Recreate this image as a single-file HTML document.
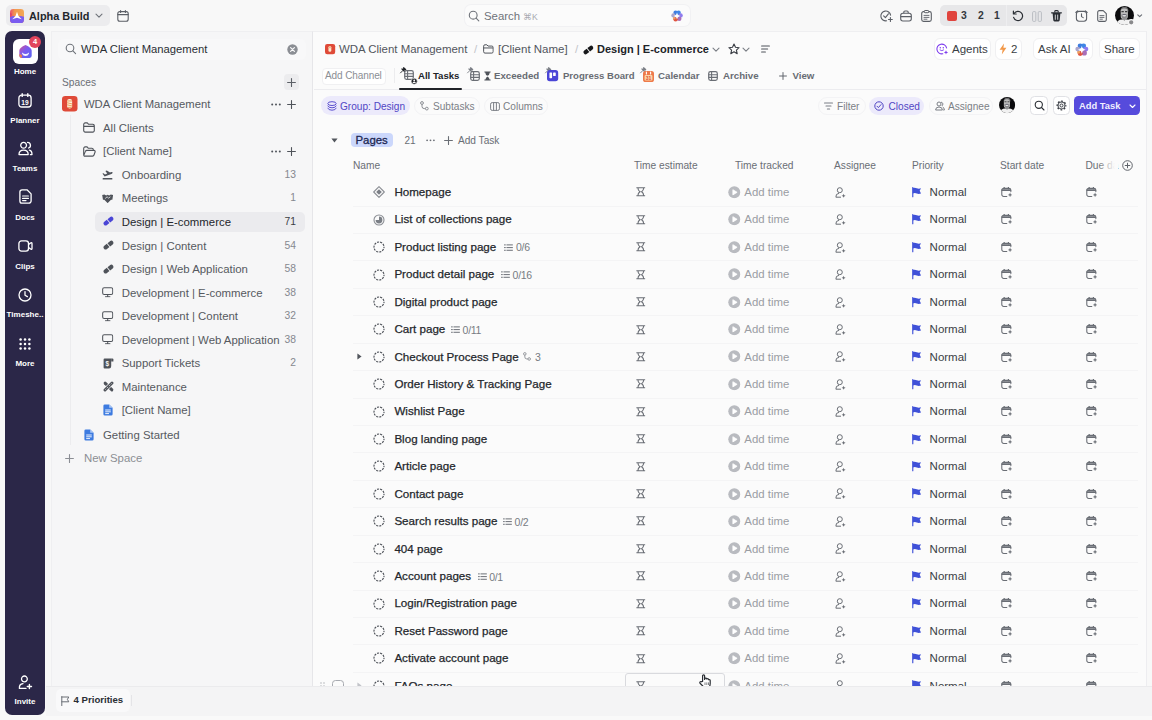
<!DOCTYPE html>
<html>
<head>
<meta charset="utf-8">
<title>Design | E-commerce</title>
<style>
*{box-sizing:border-box;margin:0;padding:0}
html,body{width:1152px;height:720px;overflow:hidden}
body{font-family:"Liberation Sans",sans-serif;background:#f8f8f8;color:#2a2e34;position:relative;font-size:11.5px}
.a{position:absolute;white-space:nowrap}
.t{position:absolute;white-space:nowrap;line-height:14px;height:14px}
svg{position:absolute;overflow:visible}
/* top bar */
#top{left:0;top:0;width:1152px;height:31px;background:#f8f8f8}
/* rail */
#rail{left:5px;top:31px;width:40px;height:684px;background:#2b2748;border-radius:7px}
.rl{color:#fff;font-weight:700;font-size:8px;text-align:center;width:40px;left:5px;line-height:10px;height:10px}
/* sidebar */
#side{left:51px;top:31px;width:262px;height:655px;background:#f6f6f7;border-left:1px solid #efeff1;border-top:1px solid #efeff1}
.sr{font-size:11.4px;color:#555960}
.cnt{font-size:10.3px;color:#85888f;text-align:right;width:30px;left:266px}
/* main */
#main{left:312px;top:31px;width:834.5px;height:655px;background:#fbfbfb;border-left:1px solid #e6e6e9;border-right:1px solid #ededf0;border-top:1px solid #efeff1}
.hd{font-size:10.2px;color:#6a6e75}
.tn{font-size:11.6px;color:#24272c;-webkit-text-stroke:0.25px #24272c}
.at{font-size:11.4px;color:#9a9da3}
.nm{font-size:11.5px;color:#3a3e45}
.sub{font-size:10.5px;letter-spacing:-.3px;color:#777b82}
.rowline{position:absolute;left:353px;width:785px;height:1px;background:#f4f4f5}
</style>
</head>
<body>
<div class="a" id="top"></div>
<div class="a" id="rail"></div>
<div class="a" id="side"></div>
<div class="a" id="main"></div>
<!-- top bar -->
<div class="a" style="left:6px;top:5px;width:104px;height:21px;background:#ececee;border-radius:5px"></div>
<svg style="left:10.2px;top:8.6px" width="14" height="14" viewBox="0 0 15 15"><defs><linearGradient id="lg1" x1="0" y1="0" x2="1" y2="0"><stop offset="0" stop-color="#ea4f6e"/><stop offset=".35" stop-color="#f2994f"/><stop offset="1" stop-color="#f2a655"/></linearGradient><clipPath id="lgc"><rect width="15" height="15" rx="3.6"/></clipPath></defs><g clip-path="url(#lgc)"><rect width="15" height="15" fill="url(#lg1)"/><path d="M0 8.4 L3.4 7.6 L7.5 8.6 L11.6 7.6 L15 8.4 V15 H0Z" fill="#7a5cf0"/><path d="M0 4 L2.2 5 L1.6 8 L0 8.6Z" fill="#e2456a"/><path d="M7.5 3 L9.1 7.6 L12.6 11 L7.5 9.3 L2.4 11 L5.9 7.6Z" fill="#fff"/></g></svg>
<div class="t" style="left:29px;top:9px;font-size:10.9px;font-weight:700;color:#23262b">Alpha Build</div>
<svg style="left:95px;top:13px" width="8" height="6" viewBox="0 0 8 6"><path d="M1 1.2 L4 4.2 L7 1.2" fill="none" stroke="#6f737a" stroke-width="1.1" stroke-linecap="round" stroke-linejoin="round"/></svg>
<svg style="left:117px;top:10px" width="12" height="12" viewBox="0 0 12 12"><rect x=".8" y="1.6" width="10.4" height="9.6" rx="2" fill="none" stroke="#5b5f66" stroke-width="1.1"/><path d="M.8 4.6 H11.2 M3.6 .6 V2.4 M8.4 .6 V2.4" stroke="#5b5f66" stroke-width="1.1" stroke-linecap="round"/></svg>
<!-- search -->
<div class="a" style="left:465px;top:5px;width:225px;height:21px;background:#fbfbfb;border-radius:6px;box-shadow:0 0 0 1px #f1f1f3"></div>
<svg style="left:468px;top:10px" width="12" height="12" viewBox="0 0 12 12"><circle cx="5.2" cy="5.2" r="3.9" fill="none" stroke="#6f737a" stroke-width="1.1"/><path d="M8.1 8.1 L10.8 10.8" stroke="#6f737a" stroke-width="1.1" stroke-linecap="round"/></svg>
<div class="t" style="left:484px;top:9px;font-size:11.4px;color:#6f737a">Search</div>
<div class="t" style="left:523px;top:9.5px;font-size:8.6px;color:#a7aab0">&#8984;K</div>
<svg style="left:671px;top:10px" width="12" height="12" viewBox="0 0 12 12"><circle cx="4.6" cy="2.7" r="2.2" fill="#3f7de0"/><circle cx="7.6" cy="2.7" r="2.2" fill="#3f86e6"/><circle cx="9.6" cy="5.4" r="2.2" fill="#8f7bef"/><circle cx="8.2" cy="8.8" r="2.3" fill="#a86fb8"/><circle cx="4.6" cy="9.2" r="2.2" fill="#e0553f"/><circle cx="3.2" cy="8" r="1.4" fill="#f0a060"/><circle cx="2.4" cy="5.4" r="2.1" fill="#aaa5cc"/><path d="M6 2.6 L6.9 5.1 L9.4 6 L6.9 6.9 L6 9.4 L5.1 6.9 L2.6 6 L5.1 5.1Z" fill="#fff"/></svg>
<!-- right icons -->
<svg style="left:880px;top:10px" width="13" height="12" viewBox="0 0 13 12"><path d="M10.6 5.2 A4.9 4.9 0 1 0 6.6 10.8" fill="none" stroke="#5b5f66" stroke-width="1.1" stroke-linecap="round"/><path d="M3.6 5.8 L5.4 7.6 L8.4 3.8" fill="none" stroke="#5b5f66" stroke-width="1.1" stroke-linecap="round" stroke-linejoin="round"/><path d="M10.4 7.6 V11.4 M8.5 9.5 H12.3" stroke="#5b5f66" stroke-width="1.1" stroke-linecap="round"/></svg>
<svg style="left:900px;top:10px" width="12" height="12" viewBox="0 0 12 12"><rect x=".7" y="3.2" width="10.6" height="7.8" rx="2.2" fill="none" stroke="#5b5f66" stroke-width="1.1"/><path d="M3.8 3.2 V2.2 A1.2 1.2 0 0 1 5 1 H7 A1.2 1.2 0 0 1 8.2 2.2 V3.2 M.7 6.6 H11.3" fill="none" stroke="#5b5f66" stroke-width="1.1"/></svg>
<svg style="left:921px;top:10px" width="11" height="12" viewBox="0 0 11 12"><rect x=".7" y="1.6" width="9.6" height="9.8" rx="1.8" fill="none" stroke="#5b5f66" stroke-width="1.1"/><rect x="3.3" y=".5" width="4.4" height="2.2" rx=".8" fill="#f8f8f8" stroke="#5b5f66" stroke-width="1"/><path d="M3 5.4 H8 M3 7.4 H8 M3 9.2 H6" stroke="#5b5f66" stroke-width=".9" stroke-linecap="round"/></svg>
<div class="a" style="left:940px;top:5px;width:127px;height:21px;background:#e7e7e9;border-radius:5px"></div>
<div class="a" style="left:1006px;top:5px;width:1px;height:21px;background:#eeeef0"></div>
<div class="a" style="left:947px;top:11px;width:9.5px;height:9.5px;background:#e0443e;border-radius:2px"></div>
<div class="t" style="left:961px;top:9.3px;font-size:10.4px;font-weight:700;color:#33373d">3</div>
<div class="t" style="left:978px;top:9.3px;font-size:10.4px;font-weight:700;color:#33373d">2</div>
<div class="t" style="left:994px;top:9.3px;font-size:10.4px;font-weight:700;color:#33373d">1</div>
<svg style="left:1012px;top:10px" width="12" height="12" viewBox="0 0 12 12"><path d="M2.2 3.4 A4.6 4.6 0 1 1 1.6 7.4" fill="none" stroke="#2a2e34" stroke-width="1.2" stroke-linecap="round"/><path d="M1.4 1.2 V4 H4.2" fill="none" stroke="#2a2e34" stroke-width="1.2" stroke-linecap="round" stroke-linejoin="round"/></svg>
<svg style="left:1032px;top:10.5px" width="10" height="11" viewBox="0 0 10 11"><rect x=".6" y=".6" width="3.2" height="9.8" rx="1" fill="none" stroke="#b9bcc2" stroke-width="1"/><rect x="6.2" y=".6" width="3.2" height="9.8" rx="1" fill="none" stroke="#b9bcc2" stroke-width="1"/></svg>
<svg style="left:1051px;top:10px" width="11" height="12" viewBox="0 0 11 12"><path d="M.6 2.8 H10.4" stroke="#2a2e34" stroke-width="1.3" stroke-linecap="round"/><path d="M3.8 2.4 V1.4 A.8.8 0 0 1 4.6 .6 H6.4 A.8.8 0 0 1 7.2 1.4 V2.4" fill="none" stroke="#2a2e34" stroke-width="1.1"/><path d="M1.6 3 L2.3 10.3 A1.2 1.2 0 0 0 3.5 11.4 H7.5 A1.2 1.2 0 0 0 8.7 10.3 L9.4 3Z" fill="#2a2e34"/><path d="M4.3 5 V9.4 M6.7 5 V9.4" stroke="#e4e4e7" stroke-width=".9" stroke-linecap="round"/></svg>
<svg style="left:1075px;top:10px" width="13" height="12" viewBox="0 0 13 12"><rect x="1.4" y="1.4" width="10.2" height="9.8" rx="2.6" fill="none" stroke="#5b5f66" stroke-width="1.1"/><path d="M6.5 3.8 V6.6 L8.2 7.6 M.8 2.4 L2.6 .8 M12.2 2.4 L10.4 .8" fill="none" stroke="#5b5f66" stroke-width="1.1" stroke-linecap="round" stroke-linejoin="round"/></svg>
<svg style="left:1097px;top:10px" width="10" height="12" viewBox="0 0 10 12"><path d="M.7 2.2 A1.6 1.6 0 0 1 2.3 .6 H6.2 L9.3 3.7 V9.8 A1.6 1.6 0 0 1 7.7 11.4 H2.3 A1.6 1.6 0 0 1 .7 9.8Z" fill="none" stroke="#5b5f66" stroke-width="1.1" stroke-linejoin="round"/><path d="M2.9 5.6 H7 M2.9 7.4 H7 M2.9 9.2 H5.4" stroke="#5b5f66" stroke-width=".9" stroke-linecap="round"/></svg>
<!-- avatar -->
<svg style="left:1115.1px;top:5.9px" width="20" height="20" viewBox="0 0 20 20"><defs><clipPath id="av1"><circle cx="9.5" cy="9.5" r="9.5"/></clipPath></defs><g clip-path="url(#av1)"><rect width="19" height="19" fill="#0b0b0d"/><path d="M5.2 6 Q5.6 .8 9.6 .8 Q13.4 .8 13.6 6 L12.8 4.4 Q9.6 2.6 6.2 4.4Z" fill="#6e6e70"/><rect x="5.7" y="2.6" width="7.2" height="10.6" rx="3.2" fill="#bdbdbd"/><path d="M6.4 5.6 H8.8 M10 5.6 H12.3" stroke="#3c3c3e" stroke-width="1.1"/><path d="M6.2 8.4 Q9.3 7.4 12.5 8.4 Q12.4 12.6 9.3 12.8 Q6.3 12.6 6.2 8.4Z" fill="#8a8a8c"/><path d="M7.4 9 Q9.3 8.5 11.2 9 Q10.6 10.6 9.3 10.6 Q8 10.6 7.4 9Z" fill="#f2f2f2"/><path d="M7.8 8.7 H10.8" stroke="#2a2a44" stroke-width=".6"/><rect x="7.6" y="12" width="3.6" height="2.4" fill="#8f8f91"/><path d="M.5 19 Q2 13.2 7.6 13.4 L9.4 14.6 L11.2 13.4 Q17 13.2 18.5 19Z" fill="#f1f1f1"/></g><circle cx="16.2" cy="16.3" r="2.7" fill="#8a8a8c" stroke="#f8f8f8" stroke-width="1.1"/></svg>
<svg style="left:1136.6px;top:14.2px" width="5.4" height="3.9" viewBox="0 0 7 5"><path d="M1 1 L3.5 3.5 L6 1" fill="none" stroke="#6a6e75" stroke-width="1.5" stroke-linecap="round" stroke-linejoin="round"/></svg>
<!--TOP-->
<!-- rail -->
<div class="a" style="left:12.5px;top:39px;width:25px;height:25px;background:#fff;border-radius:6px"></div>
<svg style="left:17.6px;top:44.4px" width="15" height="15" viewBox="0 0 16 16"><defs><linearGradient id="hg" x1="0" y1="0" x2="1" y2="1"><stop offset="0" stop-color="#d8508f"/><stop offset=".45" stop-color="#7b5cf0"/><stop offset="1" stop-color="#5a64f0"/></linearGradient></defs><path d="M1.4 7 Q1.6 3.6 8 1 Q14.4 3.6 14.6 7 V12.6 A2.2 2.2 0 0 1 12.4 14.8 H3.6 A2.2 2.2 0 0 1 1.4 12.6Z" fill="url(#hg)"/><path d="M4.4 9 Q8 12.4 11.6 9 L11.6 10.4 Q10.6 12.8 8 12.8 Q5.4 12.8 4.4 10.4Z" fill="#fff" opacity=".95"/><path d="M1.4 11 Q3.4 10.4 4.4 12.4 L3.8 14.8 Q1.6 14.6 1.4 12.6Z" fill="#ee7d4c"/></svg>
<div class="a" style="left:29px;top:36px;width:12px;height:12px;border-radius:6px;background:#e2445c;color:#fff;font-size:7.5px;font-weight:700;text-align:center;line-height:12px">4</div>
<div class="a rl" style="top:67px">Home</div>
<svg style="left:18px;top:93px" width="14" height="15" viewBox="0 0 14 15"><rect x=".9" y="2.2" width="12.2" height="11.8" rx="2.8" fill="none" stroke="#fff" stroke-width="1.3"/><path d="M4.2 .8 V3.4 M9.8 .8 V3.4" stroke="#fff" stroke-width="1.4" stroke-linecap="round"/><text x="7" y="11.6" font-family="Liberation Sans" font-weight="700" font-size="6.6" fill="#fff" text-anchor="middle">19</text></svg>
<div class="a rl" style="top:115.5px">Planner</div>
<svg style="left:18px;top:141px" width="15" height="15" viewBox="0 0 15 15"><path d="M5.6 1.4 A2.9 2.9 0 1 1 5.6 7.2 A2.9 2.9 0 1 1 5.6 1.4Z M1 13.6 Q1 9.2 5.6 9.2 Q10.2 9.2 10.2 13.6Z" fill="none" stroke="#fff" stroke-width="1.3" stroke-linejoin="round"/><path d="M9.6 1.4 A2.9 2.9 0 0 1 10.6 7 M11.4 9.2 Q14 9.8 14 13.6 H12.4" fill="none" stroke="#fff" stroke-width="1.3" stroke-linecap="round" stroke-linejoin="round"/></svg>
<div class="a rl" style="top:164px">Teams</div>
<svg style="left:19px;top:189px" width="13" height="15" viewBox="0 0 13 15"><path d="M.9 3 A2.2 2.2 0 0 1 3.1 .8 H8 L12.1 4.9 V12 A2.2 2.2 0 0 1 9.9 14.2 H3.1 A2.2 2.2 0 0 1 .9 12Z" fill="none" stroke="#fff" stroke-width="1.3" stroke-linejoin="round"/><path d="M3.6 7 H9.4 M3.6 9.4 H9.4 M3.6 11.6 H7" stroke="#fff" stroke-width="1.2" stroke-linecap="round"/></svg>
<div class="a rl" style="top:213px">Docs</div>
<svg style="left:18px;top:240px" width="15" height="12" viewBox="0 0 15 12"><rect x=".9" y=".9" width="9.6" height="10.2" rx="2.6" fill="none" stroke="#fff" stroke-width="1.3"/><path d="M10.6 4.4 L13 2.8 Q14 2.4 14 3.6 V8.4 Q14 9.6 13 9.2 L10.6 7.6" fill="none" stroke="#fff" stroke-width="1.3" stroke-linejoin="round"/></svg>
<div class="a rl" style="top:261.5px">Clips</div>
<svg style="left:18px;top:287.5px" width="14" height="14" viewBox="0 0 14 14"><circle cx="7" cy="7" r="6" fill="none" stroke="#fff" stroke-width="1.3"/><path d="M7 3.6 V7.2 L9.4 8.6" fill="none" stroke="#fff" stroke-width="1.3" stroke-linecap="round" stroke-linejoin="round"/></svg>
<div class="a rl" style="top:310px">Timeshe..</div>
<svg style="left:19px;top:338px" width="12" height="12" viewBox="0 0 12 12" fill="#fff"><circle cx="1.6" cy="1.6" r="1.25"/><circle cx="6" cy="1.6" r="1.25"/><circle cx="10.4" cy="1.6" r="1.25"/><circle cx="1.6" cy="6" r="1.25"/><circle cx="6" cy="6" r="1.25"/><circle cx="10.4" cy="6" r="1.25"/><circle cx="1.6" cy="10.4" r="1.25"/><circle cx="6" cy="10.4" r="1.25"/><circle cx="10.4" cy="10.4" r="1.25"/></svg>
<div class="a rl" style="top:359px">More</div>
<svg style="left:18px;top:675px" width="15" height="15" viewBox="0 0 15 15"><path d="M6.4 1 A2.9 2.9 0 1 1 6.4 6.8 A2.9 2.9 0 1 1 6.4 1Z" fill="none" stroke="#fff" stroke-width="1.3"/><path d="M8 13.4 H1.4 Q1 9 5 8.6" fill="none" stroke="#fff" stroke-width="1.3" stroke-linecap="round" stroke-linejoin="round"/><path d="M11.4 9.4 V13.6 M9.3 11.5 H13.5" stroke="#fff" stroke-width="1.4" stroke-linecap="round"/></svg>
<div class="a rl" style="top:697px">Invite</div>
<!--RAIL-->
<svg width="0" height="0" style="left:0;top:0"><defs>
<symbol id="i-folder" viewBox="0 0 12 11"><path d="M.7 2.4 A1.5 1.5 0 0 1 2.2 .9 H4.3 L5.6 2.3 H9.8 A1.5 1.5 0 0 1 11.3 3.8 V8.6 A1.5 1.5 0 0 1 9.8 10.1 H2.2 A1.5 1.5 0 0 1 .7 8.6Z M.7 4.4 H11.3" fill="none" stroke="currentColor" stroke-width="1.1" stroke-linejoin="round"/></symbol>
<symbol id="i-folderopen" viewBox="0 0 13 11"><path d="M.7 8.8 V2.4 A1.5 1.5 0 0 1 2.2 .9 H4.1 L5.4 2.3 H8.8 A1.5 1.5 0 0 1 10.3 3.8 V4.4" fill="none" stroke="currentColor" stroke-width="1.1" stroke-linejoin="round"/><path d="M.8 9 L2.4 5.4 A1.6 1.6 0 0 1 3.8 4.4 H11 A1.2 1.2 0 0 1 12.1 6 L11 9 A1.6 1.6 0 0 1 9.6 10.1 H1.8 A1 1 0 0 1 .8 9Z" fill="none" stroke="currentColor" stroke-width="1.1" stroke-linejoin="round"/></symbol>
<symbol id="i-plane" viewBox="0 0 11 10"><path d="M.4 3.6 L1.6 3.2 L3 4.4 L5.2 3.6 L3.4 .9 L4.8 .5 L8 2.6 L9.6 2 Q10.8 1.8 10.6 2.8 Q10.4 3.6 9.4 4 L2.6 6.4Z" fill="currentColor"/><rect x=".6" y="8" width="9.8" height="1.5" rx=".5" fill="currentColor"/></symbol>
<symbol id="i-hands" viewBox="0 0 12 10"><path d="M.2 1 L2.6 .4 L4.4 1.6 L6 .8 L7.6 1.6 L9.4 .4 L11.8 1 L11 6 L9.6 6.2 L6.4 9.4 Q6 9.8 5.6 9.4 L2.4 6.2 L1 6Z" fill="currentColor"/><path d="M3.6 4.6 L5.4 3 L7 4.4 L8.6 3.2" fill="none" stroke="#f6f6f7" stroke-width=".8" stroke-linecap="round" stroke-linejoin="round"/></symbol>
<symbol id="i-pen" viewBox="0 0 11 10.4"><path d="M6.57 7.24 L4.07 9.22 A2.2 2.2 0 0 1 1.33 5.78 L3.84 3.79Z M7.28 6.68 L9.87 4.62 A2.2 2.2 0 0 0 7.13 1.18 L4.55 3.23Z" fill="currentColor"/></symbol>
<symbol id="i-mon" viewBox="0 0 12 11"><rect x=".7" y=".7" width="10.6" height="7.2" rx="1.6" fill="none" stroke="currentColor" stroke-width="1.1"/><path d="M6 8 V9.8 M3.6 10.2 H8.4" stroke="currentColor" stroke-width="1.1" stroke-linecap="round"/></symbol>
<symbol id="i-ticket" viewBox="0 0 11 11"><path d="M.6 1.6 A1 1 0 0 1 1.6 .6 H8.2 V8.2 A2.2 2.2 0 0 1 6 10.4 H1.6 A1 1 0 0 1 .6 9.4Z" fill="currentColor"/><path d="M8.2 .6 H9.4 A1 1 0 0 1 10.4 1.6 V3.4 H8.2Z" fill="currentColor"/><text x="4.4" y="8" font-family="Liberation Sans" font-weight="700" font-size="6.4" fill="#f6f6f7" text-anchor="middle">$</text></symbol>
<symbol id="i-tools" viewBox="0 0 11 11"><path d="M2.1 2.1 L8.9 8.9" stroke="currentColor" stroke-width="2.9" stroke-linecap="round"/><path d="M2 9 L9 2" stroke="#f6f6f7" stroke-width="4.3" stroke-linecap="butt"/><path d="M2 9 L9 2" stroke="currentColor" stroke-width="2.9" stroke-linecap="round"/><path d="M2.4 8.6 L8.6 2.4" stroke="#f6f6f7" stroke-width=".8" stroke-dasharray="1.2 1.3"/></symbol>
<symbol id="i-doc" viewBox="0 0 10 12"><path d="M.4 1.8 A1.4 1.4 0 0 1 1.8 .4 H6.2 L9.6 3.8 V10.2 A1.4 1.4 0 0 1 8.2 11.6 H1.8 A1.4 1.4 0 0 1 .4 10.2Z" fill="#3d7be0"/><path d="M6.2 .4 V3.8 H9.6Z" fill="#a9c6f5"/><path d="M2.6 6 H7.4 M2.6 7.8 H7.4 M2.6 9.6 H5.6" stroke="#fff" stroke-width=".9" stroke-linecap="round"/></symbol>
<symbol id="i-dots" viewBox="0 0 10 3"><circle cx="1.2" cy="1.5" r="1"/><circle cx="5" cy="1.5" r="1"/><circle cx="8.8" cy="1.5" r="1"/></symbol>
<symbol id="i-plus" viewBox="0 0 9 9"><path d="M4.5 .6 V8.4 M.6 4.5 H8.4" stroke="currentColor" stroke-width="1.1" stroke-linecap="round"/></symbol>
</defs></svg>
<div class="a" style="left:58px;top:39px;width:248px;height:21px;background:#f8f8f9;border-radius:6px"></div>
<svg style="left:65px;top:43px" width="12" height="12" viewBox="0 0 12 12"><circle cx="5" cy="5" r="3.8" fill="none" stroke="#6f737a" stroke-width="1.1"/><path d="M7.9 7.9 L10.6 10.6" stroke="#6f737a" stroke-width="1.1" stroke-linecap="round"/></svg>
<div class="t" style="left:81px;top:42px;font-size:11.25px;color:#2a2e34">WDA Client Management</div>
<svg style="left:287px;top:44px" width="11" height="11" viewBox="0 0 11 11"><circle cx="5.5" cy="5.5" r="5.2" fill="#8b8e94"/><path d="M3.6 3.6 L7.4 7.4 M7.4 3.6 L3.6 7.4" stroke="#f8f8f9" stroke-width="1.2" stroke-linecap="round"/></svg>
<div class="t" style="left:62px;top:75.5px;font-size:10.2px;color:#6a6e75">Spaces</div>
<div class="a" style="left:284px;top:74px;width:15px;height:16px;background:#ececee;border-radius:4px"></div>
<svg style="left:287px;top:77.5px;color:#5b5f66" width="9" height="9"><use href="#i-plus"/></svg>
<div class="a" style="left:70px;top:115px;width:1px;height:330px;background:#ececee"></div>
<svg style="left:62.1px;top:96.4px" width="15.5" height="15.5" viewBox="0 0 15 15"><rect width="15" height="15" rx="3.2" fill="#df4a38"/><rect x="5" y="2.8" width="4.8" height="9.2" rx="2" fill="#fbf1e2"/><path d="M5.6 4.8 H9.2 M5.4 6.6 L9.4 7.6 M5.4 8.6 L9.4 9.6 M6 11 H8.8" stroke="#f09a4a" stroke-width=".9" stroke-linecap="round"/></svg>
<div class="t sr" style="left:84px;top:97px;font-size:11.25px">WDA Client Management</div>
<svg style="left:271px;top:102.5px;fill:#4f535a" width="10" height="3"><use href="#i-dots"/></svg>
<svg style="left:287px;top:99.5px;color:#4f535a" width="9" height="9"><use href="#i-plus"/></svg>
<svg style="left:83px;top:122.2px;color:#4f535a" width="12" height="11"><use href="#i-folder"/></svg>
<div class="t sr" style="left:103px;top:120.8px">All Clients</div>
<svg style="left:83px;top:145.8px;color:#4f535a" width="13" height="11"><use href="#i-folderopen"/></svg>
<div class="t sr" style="left:103px;top:144.3px">[Client Name]</div>
<svg style="left:271px;top:149.8px;fill:#4f535a" width="10" height="3"><use href="#i-dots"/></svg>
<svg style="left:287px;top:146.8px;color:#4f535a" width="9" height="9"><use href="#i-plus"/></svg>
<div class="a" style="left:95px;top:211.6px;width:209.5px;height:20.6px;background:#ebebee;border-radius:5px"></div>
<svg style="left:101.5px;top:170.1px;color:#4f535a" width="11" height="10"><use href="#i-plane"/></svg>
<div class="t sr" style="left:121.7px;top:167.9px;">Onboarding</div>
<div class="t cnt" style="top:167.9px;">13</div>
<svg style="left:102px;top:193.8px;color:#4f535a" width="11.3" height="9.4"><use href="#i-hands"/></svg>
<div class="t sr" style="left:121.7px;top:191.4px;">Meetings</div>
<div class="t cnt" style="top:191.4px;">1</div>
<svg style="left:102.5px;top:216.4px;color:#4a45d6" width="10.8" height="10.2"><use href="#i-pen"/></svg>
<div class="t sr" style="left:121.7px;top:214.9px;color:#24272c;">Design | E-commerce</div>
<div class="t cnt" style="top:214.9px;color:#3a3e45;">71</div>
<svg style="left:102.5px;top:240.0px;color:#4f535a" width="10.8" height="10.2"><use href="#i-pen"/></svg>
<div class="t sr" style="left:121.7px;top:238.5px;">Design | Content</div>
<div class="t cnt" style="top:238.5px;">54</div>
<svg style="left:102.5px;top:263.6px;color:#4f535a" width="10.8" height="10.2"><use href="#i-pen"/></svg>
<div class="t sr" style="left:121.7px;top:262.1px;">Design | Web Application</div>
<div class="t cnt" style="top:262.1px;">58</div>
<svg style="left:102.0px;top:287.1px;color:#4f535a" width="11.4" height="10.6"><use href="#i-mon"/></svg>
<div class="t sr" style="left:121.7px;top:285.6px;">Development | E-commerce</div>
<div class="t cnt" style="top:285.6px;">38</div>
<svg style="left:102.0px;top:310.7px;color:#4f535a" width="11.4" height="10.6"><use href="#i-mon"/></svg>
<div class="t sr" style="left:121.7px;top:309.2px;">Development | Content</div>
<div class="t cnt" style="top:309.2px;">32</div>
<svg style="left:102.0px;top:334.2px;color:#4f535a" width="11.4" height="10.6"><use href="#i-mon"/></svg>
<div class="t sr" style="left:121.7px;top:332.7px;">Development | Web Application</div>
<div class="t cnt" style="top:332.7px;">38</div>
<svg style="left:102.5px;top:357.8px;color:#4f535a" width="11" height="11"><use href="#i-ticket"/></svg>
<div class="t sr" style="left:121.7px;top:356.2px;">Support Tickets</div>
<div class="t cnt" style="top:356.2px;">2</div>
<svg style="left:102.5px;top:381.3px;color:#4f535a" width="11" height="11"><use href="#i-tools"/></svg>
<div class="t sr" style="left:121.7px;top:379.8px;">Maintenance</div>
<svg style="left:103.0px;top:404.4px;color:#4f535a" width="10" height="12"><use href="#i-doc"/></svg>
<div class="t sr" style="left:121.7px;top:403.4px;">[Client Name]</div>
<svg style="left:84px;top:428.5px" width="10" height="12"><use href="#i-doc"/></svg>
<div class="t sr" style="left:103px;top:427.5px">Getting Started</div>
<svg style="left:65px;top:453.7px;color:#8b8e94" width="9" height="9"><use href="#i-plus"/></svg>
<div class="t sr" style="left:84px;top:451.2px;color:#8b8e94">New Space</div>
<!--SIDE-->
<svg style="left:324.8px;top:44.1px" width="10.2" height="10.2" viewBox="0 0 10 10"><rect width="10" height="10" rx="2.2" fill="#df4a38"/><rect x="3.4" y="2.1" width="2.8" height="5.6" rx="1.2" fill="#fbe9cf"/><path d="M3.8 3.6 H5.8" stroke="#f09a4a" stroke-width=".7"/></svg>
<div class="t" style="left:339px;top:42px;font-size:11.45px;color:#52565d">WDA Client Management</div>
<div class="t" style="left:474px;top:42px;font-size:11.5px;color:#c2c4c9">/</div>
<svg style="left:483.3px;top:44.3px;color:#4f535a" width="10.8" height="9.9"><use href="#i-folder"/></svg>
<div class="t" style="left:498px;top:42px;font-size:11.5px;color:#52565d">[Client Name]</div>
<div class="t" style="left:575px;top:42px;font-size:11.5px;color:#c2c4c9">/</div>
<svg style="left:582.5px;top:44.6px;color:#17181b" width="10.6" height="10"><use href="#i-pen"/></svg>
<div class="t" style="left:597px;top:42px;font-size:11px;font-weight:700;color:#202328">Design | E-commerce</div>
<svg style="left:712px;top:47px" width="8" height="6" viewBox="0 0 8 6"><path d="M1 1.2 L4 4.2 L7 1.2" fill="none" stroke="#7b7f86" stroke-width="1.1" stroke-linecap="round" stroke-linejoin="round"/></svg>
<svg style="left:727.5px;top:43px" width="12" height="12" viewBox="0 0 12 12"><path d="M6 1 L7.5 4.3 L11.1 4.7 L8.4 7.1 L9.2 10.7 L6 8.8 L2.8 10.7 L3.6 7.1 L.9 4.7 L4.5 4.3Z" fill="none" stroke="#3a3e45" stroke-width="1.1" stroke-linejoin="round"/></svg>
<svg style="left:742px;top:47px" width="8" height="6" viewBox="0 0 8 6"><path d="M1 1.2 L4 4.2 L7 1.2" fill="none" stroke="#7b7f86" stroke-width="1.1" stroke-linecap="round" stroke-linejoin="round"/></svg>
<svg style="left:761px;top:45px" width="9" height="8" viewBox="0 0 9 8"><path d="M.6 1 H8.4 M.6 4 H6.6 M.6 7 H4.4" stroke="#4f535a" stroke-width="1.1" stroke-linecap="round"/></svg>
<div class="a" style="left:934px;top:38px;width:57px;height:22px;background:#fff;border:1px solid #f0f0f2;border-radius:6px"></div>
<svg style="left:936px;top:43px" width="12" height="12" viewBox="0 0 12 12"><path d="M10.6 5 A4.9 4.9 0 1 0 6.8 10.8" fill="none" stroke="#7c3aed" stroke-width="1.1" stroke-linecap="round"/><circle cx="4.3" cy="4.8" r=".7" fill="#7c3aed"/><circle cx="7.3" cy="4.8" r=".7" fill="#7c3aed"/><path d="M4 7 Q5.8 8.6 7.6 7" fill="none" stroke="#7c3aed" stroke-width=".9" stroke-linecap="round"/><path d="M10 7.2 L10.6 8.8 L12.2 9.4 L10.6 10 L10 11.6 L9.4 10 L7.8 9.4 L9.4 8.8Z" fill="#7c3aed"/></svg>
<div class="t" style="left:952px;top:42px;font-size:11.5px;color:#3a3e45">Agents</div>
<div class="a" style="left:995px;top:38px;width:27px;height:22px;background:#fff;border:1px solid #f0f0f2;border-radius:6px"></div>
<svg style="left:999px;top:43px" width="8" height="12" viewBox="0 0 8 12"><path d="M5 .4 L.6 6.8 H3.6 L2.8 11.6 L7.4 4.8 H4.4Z" fill="#f2994a"/></svg>
<div class="t" style="left:1011px;top:42px;font-size:11.5px;color:#3a3e45">2</div>
<div class="a" style="left:1033px;top:38px;width:60px;height:22px;background:#fff;border:1px solid #f0f0f2;border-radius:6px"></div>
<div class="t" style="left:1038px;top:42px;font-size:11.5px;color:#3a3e45">Ask AI</div>
<svg style="left:1075px;top:42.6px" width="13.6" height="13.6" viewBox="0 0 12 12"><circle cx="4.6" cy="2.7" r="2.2" fill="#3f7de0"/><circle cx="7.6" cy="2.7" r="2.2" fill="#3f86e6"/><circle cx="9.6" cy="5.4" r="2.2" fill="#8f7bef"/><circle cx="8.2" cy="8.8" r="2.3" fill="#a86fb8"/><circle cx="4.6" cy="9.2" r="2.2" fill="#e0553f"/><circle cx="3.2" cy="8" r="1.4" fill="#f0a060"/><circle cx="2.4" cy="5.4" r="2.1" fill="#aaa5cc"/><path d="M6 2.6 L6.9 5.1 L9.4 6 L6.9 6.9 L6 9.4 L5.1 6.9 L2.6 6 L5.1 5.1Z" fill="#fff"/></svg>
<div class="a" style="left:1099px;top:38px;width:41px;height:22px;background:#fff;border:1px solid #f0f0f2;border-radius:6px"></div>
<div class="t" style="left:1104px;top:42px;font-size:11.5px;color:#3a3e45">Share</div>
<div class="a" style="left:322px;top:67.5px;width:64px;height:17px;background:#fff;border:1px solid #f0f0f2;border-radius:4px"></div>
<div class="t" style="left:325px;top:68.5px;font-size:10px;letter-spacing:-.1px;color:#8b8e94">Add Channel</div>
<div class="a" style="left:393.5px;top:68px;width:1px;height:15px;background:#ececee"></div>
<div class="a" style="left:314px;top:88.5px;width:832px;height:1px;background:#ececef"></div>
<div class="a" style="left:399.2px;top:88.3px;width:62.8px;height:1.8px;background:#202328;border-radius:1px"></div>
<svg style="left:400.2px;top:66.9px" width="6.4" height="6.4" viewBox="0 0 6.4 6.4"><path d="M3.7 1 L5.4 2.7" stroke="#202328" stroke-width="1.7" stroke-linecap="round"/><path d="M4.5 1.9 L3.2 3.2" stroke="#202328" stroke-width="2.3"/><path d="M2 2 L4.4 4.4" stroke="#202328" stroke-width="1.3" stroke-linecap="round"/><path d="M2.8 3.6 L.5 5.9" stroke="#202328" stroke-width=".9" stroke-linecap="round"/></svg>
<svg style="left:403.7px;top:70.4px" width="10" height="10" viewBox="0 0 10 10"><rect x=".7" y=".7" width="8.6" height="8.6" rx="1.8" fill="none" stroke="#6a6e75" stroke-width="1.2"/><path d="M.7 3.7 H9.3 M.7 6.4 H9.3 M3.6 .7 V9.3" stroke="#6a6e75" stroke-width="1.1"/></svg>
<svg style="left:411.1px;top:77.8px" width="6.4" height="6.4" viewBox="0 0 7 7"><circle cx="3.5" cy="3.5" r="3.3" fill="#202328" stroke="#fbfbfb" stroke-width=".6"/><circle cx="3.5" cy="2.7" r="1" fill="#fbfbfb"/><path d="M1.7 5.6 Q1.9 4.1 3.5 4.1 Q5.1 4.1 5.3 5.6Z" fill="#fbfbfb"/></svg>
<div class="t" style="left:418px;top:68.5px;font-size:9.6px;font-weight:700;color:#202328">All Tasks</div>
<svg style="left:466.7px;top:66.9px" width="6.4" height="6.4" viewBox="0 0 6.4 6.4"><path d="M3.7 1 L5.4 2.7" stroke="#7b7f86" stroke-width="1.7" stroke-linecap="round"/><path d="M4.5 1.9 L3.2 3.2" stroke="#7b7f86" stroke-width="2.3"/><path d="M2 2 L4.4 4.4" stroke="#7b7f86" stroke-width="1.3" stroke-linecap="round"/><path d="M2.8 3.6 L.5 5.9" stroke="#7b7f86" stroke-width=".9" stroke-linecap="round"/></svg>
<svg style="left:470px;top:70.8px" width="10" height="10" viewBox="0 0 10 10"><rect x=".7" y=".7" width="8.6" height="8.6" rx="1.8" fill="none" stroke="#6a6e75" stroke-width="1.2"/><path d="M.7 3.7 H9.3 M.7 6.4 H9.3 M3.6 .7 V9.3" stroke="#6a6e75" stroke-width="1.1"/></svg>
<svg style="left:484px;top:71px" width="7" height="10" viewBox="0 0 7 10"><path d="M.4 .4 H6.6 V1.4 H.4Z M.4 8.6 H6.6 V9.6 H.4Z M1.2 1.6 H5.8 Q5.6 4 3.5 4.8 Q1.4 4 1.2 1.6Z M3.5 5.4 Q5.2 6.2 5.6 8.4 H1.4 Q1.8 6.2 3.5 5.4Z" fill="#4f535a"/></svg>
<div class="t" style="left:494px;top:68.5px;font-size:9.7px;font-weight:700;color:#686c73">Exceeded</div>
<svg style="left:545px;top:66.6px" width="6.4" height="6.4" viewBox="0 0 6.4 6.4"><path d="M3.7 1 L5.4 2.7" stroke="#7b7f86" stroke-width="1.7" stroke-linecap="round"/><path d="M4.5 1.9 L3.2 3.2" stroke="#7b7f86" stroke-width="2.3"/><path d="M2 2 L4.4 4.4" stroke="#7b7f86" stroke-width="1.3" stroke-linecap="round"/><path d="M2.8 3.6 L.5 5.9" stroke="#7b7f86" stroke-width=".9" stroke-linecap="round"/></svg>
<svg style="left:547.4px;top:70.4px" width="11.2" height="11.2" viewBox="0 0 11 11"><rect width="11" height="11" rx="2.6" fill="#4a45d6"/><rect x="2.4" y="2.4" width="2.6" height="5.6" rx=".6" fill="#fff"/><rect x="6" y="2.4" width="2.6" height="3.6" rx=".6" fill="#fff"/></svg>
<div class="t" style="left:563px;top:68.5px;font-size:9.55px;font-weight:700;color:#686c73">Progress Board</div>
<svg style="left:640.2px;top:66.6px" width="6.4" height="6.4" viewBox="0 0 6.4 6.4"><path d="M3.7 1 L5.4 2.7" stroke="#7b7f86" stroke-width="1.7" stroke-linecap="round"/><path d="M4.5 1.9 L3.2 3.2" stroke="#7b7f86" stroke-width="2.3"/><path d="M2 2 L4.4 4.4" stroke="#7b7f86" stroke-width="1.3" stroke-linecap="round"/><path d="M2.8 3.6 L.5 5.9" stroke="#7b7f86" stroke-width=".9" stroke-linecap="round"/></svg>
<svg style="left:643px;top:70.5px" width="11" height="11" viewBox="0 0 11 11"><rect width="11" height="11" rx="2.6" fill="#ee7a4a"/><rect x="1.6" y="4" width="7.8" height="5.6" rx="1" fill="#fbd7a8"/><path d="M3.4 1 V3 M7.6 1 V3" stroke="#fff" stroke-width="1.1" stroke-linecap="round"/><text x="5.5" y="9" font-family="Liberation Sans" font-weight="700" font-size="5" fill="#e2553a" text-anchor="middle">31</text></svg>
<div class="t" style="left:658px;top:68.5px;font-size:9.7px;font-weight:700;color:#686c73">Calendar</div>
<svg style="left:708.2px;top:70.8px" width="10" height="10" viewBox="0 0 10 10"><rect x=".7" y=".7" width="8.6" height="8.6" rx="1.8" fill="none" stroke="#6a6e75" stroke-width="1.2"/><path d="M.7 3.7 H9.3 M.7 6.4 H9.3 M3.6 .7 V9.3" stroke="#6a6e75" stroke-width="1.1"/></svg>
<div class="t" style="left:723px;top:68.5px;font-size:9.7px;font-weight:700;color:#686c73">Archive</div>
<svg style="left:778.5px;top:71.5px;color:#5f636a" width="8" height="8"><use href="#i-plus"/></svg>
<div class="t" style="left:792.5px;top:68.5px;font-size:9.7px;font-weight:700;color:#686c73">View</div>
<div class="a" style="left:321px;top:96.4px;width:89px;height:18.4px;background:#eceafb;border-radius:9.2px"></div>
<svg style="left:326.5px;top:101px" width="10" height="10" viewBox="0 0 10 10"><ellipse cx="5" cy="2.6" rx="4.2" ry="1.9" fill="none" stroke="#5b4fd0" stroke-width="1"/><path d="M.8 5 Q1.4 6.8 5 6.8 Q8.6 6.8 9.2 5 M.8 7.2 Q1.4 9.2 5 9.2 Q8.6 9.2 9.2 7.2" fill="none" stroke="#5b4fd0" stroke-width="1" stroke-linecap="round"/></svg>
<div class="t" style="left:340px;top:99.6px;font-size:10.1px;color:#5146c4">Group: Design</div>
<div class="a" style="left:414px;top:96.5px;width:66px;height:18.5px;border:1px solid #f3f3f5;border-radius:9px"></div>
<svg style="left:420px;top:101px" width="9" height="10" viewBox="0 0 9 10"><circle cx="2" cy="2" r="1.4" fill="none" stroke="#8b8e94" stroke-width="1"/><circle cx="6.8" cy="7.6" r="1.4" fill="none" stroke="#8b8e94" stroke-width="1"/><path d="M2 3.4 V5.4 Q2 7.6 4.2 7.6 H5.4" fill="none" stroke="#8b8e94" stroke-width="1"/></svg>
<div class="t" style="left:433px;top:99.6px;font-size:10.1px;color:#7b7f86">Subtasks</div>
<div class="a" style="left:484px;top:96.5px;width:64px;height:18.5px;border:1px solid #f3f3f5;border-radius:9px"></div>
<svg style="left:490px;top:101.5px" width="10" height="9" viewBox="0 0 10 9"><rect x=".6" y=".6" width="8.8" height="7.8" rx="1.6" fill="none" stroke="#7b7f86" stroke-width="1"/><path d="M3.6 .6 V8.4 M6.4 .6 V8.4" stroke="#7b7f86" stroke-width="1"/></svg>
<div class="t" style="left:503px;top:99.6px;font-size:10.1px;color:#7b7f86">Columns</div>
<div class="a" style="left:818px;top:96.5px;width:48px;height:18.5px;border:1px solid #f3f3f5;border-radius:9px"></div>
<svg style="left:823.5px;top:102px" width="9" height="8" viewBox="0 0 9 8"><path d="M.5 1 H8.5 M2 4 H7 M3.4 7 H5.6" stroke="#7b7f86" stroke-width="1.1" stroke-linecap="round"/></svg>
<div class="t" style="left:837px;top:99.6px;font-size:10.1px;color:#7b7f86">Filter</div>
<div class="a" style="left:869px;top:97px;width:55px;height:18px;background:#eceafb;border-radius:9px"></div>
<svg style="left:874px;top:101px" width="10" height="10" viewBox="0 0 10 10"><circle cx="5" cy="5" r="4.2" fill="none" stroke="#5146c4" stroke-width="1"/><path d="M3 5.2 L4.4 6.6 L7 3.6" fill="none" stroke="#5146c4" stroke-width="1" stroke-linecap="round" stroke-linejoin="round"/></svg>
<div class="t" style="left:888.5px;top:99.6px;font-size:10.1px;color:#5146c4">Closed</div>
<div class="a" style="left:929px;top:96.5px;width:64px;height:18.5px;border:1px solid #f3f3f5;border-radius:9px"></div>
<svg style="left:934.5px;top:101px" width="10" height="10" viewBox="0 0 10 10"><circle cx="4" cy="3" r="2" fill="none" stroke="#7b7f86" stroke-width="1"/><path d="M.6 9 Q.6 6 4 6 Q7.4 6 7.4 9Z" fill="none" stroke="#7b7f86" stroke-width="1" stroke-linejoin="round"/><path d="M6.4 1.2 A2 2 0 0 1 7 4.8 M8 6.2 Q9.4 6.8 9.4 9 H8.6" fill="none" stroke="#7b7f86" stroke-width="1" stroke-linecap="round"/></svg>
<div class="t" style="left:948px;top:99.6px;font-size:10.1px;color:#7b7f86">Assignee</div>
<svg style="left:999px;top:97.3px" width="16.2" height="16.2" viewBox="0 0 19 19"><g clip-path="url(#av1)"><rect width="19" height="19" fill="#0b0b0d"/><path d="M5.2 6 Q5.6 .8 9.6 .8 Q13.4 .8 13.6 6 L12.8 4.4 Q9.6 2.6 6.2 4.4Z" fill="#6e6e70"/><rect x="5.7" y="2.6" width="7.2" height="10.6" rx="3.2" fill="#bdbdbd"/><path d="M6.4 5.6 H8.8 M10 5.6 H12.3" stroke="#3c3c3e" stroke-width="1.1"/><path d="M6.2 8.4 Q9.3 7.4 12.5 8.4 Q12.4 12.6 9.3 12.8 Q6.3 12.6 6.2 8.4Z" fill="#8a8a8c"/><path d="M7.4 9 Q9.3 8.5 11.2 9 Q10.6 10.6 9.3 10.6 Q8 10.6 7.4 9Z" fill="#f2f2f2"/><path d="M7.8 8.7 H10.8" stroke="#2a2a44" stroke-width=".6"/><rect x="7.6" y="12" width="3.6" height="2.4" fill="#8f8f91"/><path d="M.5 19 Q2 13.2 7.6 13.4 L9.4 14.6 L11.2 13.4 Q17 13.2 18.5 19Z" fill="#f1f1f1"/></g></svg>
<div class="a" style="left:1030.3px;top:96.4px;width:17.5px;height:18.2px;background:#fff;border:1px solid #e0e1e5;border-radius:4.5px"></div>
<svg style="left:1033.8px;top:100px" width="11" height="11" viewBox="0 0 11 11"><circle cx="4.8" cy="4.8" r="3.6" fill="none" stroke="#2a2e34" stroke-width="1.1"/><path d="M7.5 7.5 L10 10" stroke="#2a2e34" stroke-width="1.1" stroke-linecap="round"/></svg>
<div class="a" style="left:1052.5px;top:96.4px;width:17.8px;height:18.2px;background:#fff;border:1px solid #e0e1e5;border-radius:4.5px"></div>
<svg style="left:1055.9px;top:100px" width="11" height="11" viewBox="0 0 11 11"><circle cx="5.5" cy="5.5" r="4.35" fill="none" stroke="#3a3e45" stroke-width="1.3" stroke-dasharray="1.75 1.666" stroke-dashoffset=".9"/><circle cx="5.5" cy="5.5" r="3.45" fill="#fff" stroke="#3a3e45" stroke-width="1.05"/><circle cx="5.5" cy="5.5" r="1.5" fill="none" stroke="#3a3e45" stroke-width="1"/></svg>
<div class="a" style="left:1074px;top:96.4px;width:66px;height:18.4px;background:#564bdc;border-radius:4.5px"></div>
<div class="t" style="left:1079px;top:98.8px;font-size:9.35px;font-weight:700;color:#f1efff">Add Task</div>
<svg style="left:1129px;top:103.5px" width="7" height="5" viewBox="0 0 7 5"><path d="M1 1 L3.5 3.5 L6 1" fill="none" stroke="#fff" stroke-width="1.1" stroke-linecap="round" stroke-linejoin="round"/></svg>
<svg style="left:331px;top:138px" width="7" height="5" viewBox="0 0 7 5"><path d="M.4 .4 H6.6 L3.5 4.4Z" fill="#52565d"/></svg>
<div class="a" style="left:350.5px;top:133.3px;width:42.2px;height:14px;background:#cbd7fb;border-radius:4px"></div>
<div class="t" style="left:355.5px;top:133px;font-size:11.4px;color:#1c2752;-webkit-text-stroke:.3px #1c2752">Pages</div>
<div class="t" style="left:404.5px;top:133.5px;font-size:10px;color:#6a6e75">21</div>
<svg style="left:425.5px;top:139px;fill:#6a6e75" width="9" height="2.7"><use href="#i-dots"/></svg>
<svg style="left:444.2px;top:135.7px;color:#6a6e75" width="9" height="9"><use href="#i-plus"/></svg>
<div class="t" style="left:458px;top:133.5px;font-size:10.1px;color:#6a6e75">Add Task</div>
<div class="t hd" style="left:353px;top:158.5px">Name</div>
<div class="t hd" style="left:634px;top:158.5px">Time estimate</div>
<div class="t hd" style="left:735px;top:158.5px">Time tracked</div>
<div class="t hd" style="left:834px;top:158.5px">Assignee</div>
<div class="t hd" style="left:912px;top:158.5px">Priority</div>
<div class="t hd" style="left:1000px;top:158.5px">Start date</div>
<div class="t hd" style="left:1085.5px;top:158.5px">Due da</div>
<div class="a" style="left:1098px;top:156px;width:20px;height:18px;background:linear-gradient(90deg,rgba(251,251,251,0),#fbfbfb 85%)"></div>
<svg style="left:1122px;top:159.5px" width="11" height="11" viewBox="0 0 11 11"><circle cx="5.5" cy="5.5" r="4.8" fill="none" stroke="#5f636a" stroke-width="1"/><path d="M5.5 3.2 V7.8 M3.2 5.5 H7.8" stroke="#5f636a" stroke-width="1" stroke-linecap="round"/></svg>
<!--MAIN-->
<svg width="0" height="0" style="left:0;top:0"><defs>
<symbol id="s-open" viewBox="0 0 12 12"><circle cx="6" cy="6" r="5" fill="none" stroke="#4f535a" stroke-width="1.15" stroke-dasharray="2.1 1.04" stroke-dashoffset="1"/></symbol>
<symbol id="s-dia" viewBox="0 0 12 12"><path d="M6 .7 L11.3 6 L6 11.3 L.7 6Z" fill="none" stroke="#8b8e94" stroke-width="1.1" stroke-linejoin="round"/><path d="M6 3.2 L8.8 6 L6 8.8 L3.2 6Z" fill="#7b7f86"/></symbol>
<symbol id="s-pie" viewBox="0 0 12 12"><circle cx="6" cy="6" r="5" fill="none" stroke="#8b8e94" stroke-width="1.1"/><path d="M6 6 L6 2.6 A3.4 3.4 0 1 1 2.6 6Z" fill="#7b7f86"/></symbol>
<symbol id="c-hour" viewBox="0 0 10 10"><path d="M.8 .8 H9.2 M.8 9.2 H9.2 M2 .8 Q2 3.7 4.1 5 Q2 6.3 2 9.2 M8 .8 Q8 3.7 5.9 5 Q8 6.3 8 9.2" fill="none" stroke="#6a6e75" stroke-width="1.15" stroke-linecap="round"/></symbol>
<symbol id="c-play" viewBox="0 0 13 13"><circle cx="6.5" cy="6.5" r="6.2" fill="#b9bbc0"/><path d="M5 3.8 L9.4 6.5 L5 9.2Z" fill="#fff" stroke="#fff" stroke-width=".8" stroke-linejoin="round"/></symbol>
<symbol id="c-asg" viewBox="0 0 11 11"><path d="M4.8 .7 A2.5 2.5 0 1 1 4.8 5.7 A2.5 2.5 0 1 1 4.8 .7Z" fill="none" stroke="#6a6e75" stroke-width="1"/><path d="M5.6 10.2 H.9 Q.5 6.6 3.6 6.4" fill="none" stroke="#6a6e75" stroke-width="1" stroke-linecap="round" stroke-linejoin="round"/><path d="M8.6 6.8 L9.2 8.2 L10.6 8.8 L9.2 9.4 L8.6 10.8 L8 9.4 L6.6 8.8 L8 8.2Z" fill="#6a6e75"/></symbol>
<symbol id="c-flag" viewBox="0 0 10 11"><path d="M.8 .6 V10.4" stroke="#3f51d8" stroke-width="1.2" stroke-linecap="round"/><path d="M.8 1 Q3 .2 5 1.2 Q7 2.2 9.4 1.2 L8 4 L9.4 6.8 Q7 7.8 5 6.8 Q3 5.8 .8 6.8Z" fill="#3f51d8"/></symbol>
<symbol id="c-cal" viewBox="0 0 12 11"><path d="M10.2 4.8 V3.4 A2 2 0 0 0 8.2 1.4 H2.8 A2 2 0 0 0 .8 3.4 V7.8 A2 2 0 0 0 2.8 9.8 H6" fill="none" stroke="#6a6e75" stroke-width="1.1" stroke-linecap="round"/><path d="M1.2 3.3 H9.8" stroke="#6a6e75" stroke-width="1.7" stroke-linecap="round"/><path d="M3.3 .5 V1.8 M7.7 .5 V1.8" stroke="#6a6e75" stroke-width="1.3" stroke-linecap="round"/><path d="M9.4 5.8 L10.1 7.5 L11.8 8.2 L10.1 8.9 L9.4 10.6 L8.7 8.9 L7 8.2 L8.7 7.5Z" fill="#6a6e75"/></symbol>
<symbol id="c-chk" viewBox="0 0 10 8"><path d="M3.2 1 H9.4 M3.2 4 H9.4 M3.2 7 H9.4" stroke="#6a6e75" stroke-width="1.1" stroke-linecap="round"/><path d="M.5 1 H1.5 M.5 4 H1.5 M.5 7 H1.5" stroke="#6a6e75" stroke-width="1.1" stroke-linecap="round"/></symbol>
<symbol id="c-sub" viewBox="0 0 9 10"><circle cx="2" cy="2" r="1.4" fill="none" stroke="#8b8e94" stroke-width="1"/><circle cx="6.8" cy="7.6" r="1.4" fill="none" stroke="#8b8e94" stroke-width="1"/><path d="M2 3.4 V5.4 Q2 7.6 4.2 7.6 H5.4" fill="none" stroke="#8b8e94" stroke-width="1"/></symbol>
</defs></svg>
<div class="rowline" style="top:205.6px"></div>
<svg style="left:372.5px;top:186.2px" width="12" height="12"><use href="#s-dia"/></svg>
<div class="t tn" id="n0" style="left:394.4px;top:185.0px">Homepage</div>
<svg style="left:635.5px;top:187.4px" width="9.6" height="9.6"><use href="#c-hour"/></svg>
<svg style="left:728px;top:185.9px" width="12.6" height="12.6"><use href="#c-play"/></svg>
<div class="t at" style="left:744.3px;top:185.0px">Add time</div>
<svg style="left:834.8px;top:186.8px" width="11" height="11"><use href="#c-asg"/></svg>
<svg style="left:912.3px;top:186.8px" width="9.6" height="10.6"><use href="#c-flag"/></svg>
<div class="t nm" style="left:929.6px;top:185.0px">Normal</div>
<svg style="left:1000.8px;top:187.0px" width="11.6" height="10.6"><use href="#c-cal"/></svg>
<svg style="left:1085.8px;top:187.0px" width="11.6" height="10.6"><use href="#c-cal"/></svg>
<div class="rowline" style="top:233.0px"></div>
<svg style="left:372.5px;top:213.6px" width="12" height="12"><use href="#s-pie"/></svg>
<div class="t tn" id="n1" style="left:394.4px;top:212.4px">List of collections page</div>
<svg style="left:635.5px;top:214.8px" width="9.6" height="9.6"><use href="#c-hour"/></svg>
<svg style="left:728px;top:213.3px" width="12.6" height="12.6"><use href="#c-play"/></svg>
<div class="t at" style="left:744.3px;top:212.4px">Add time</div>
<svg style="left:834.8px;top:214.2px" width="11" height="11"><use href="#c-asg"/></svg>
<svg style="left:912.3px;top:214.2px" width="9.6" height="10.6"><use href="#c-flag"/></svg>
<div class="t nm" style="left:929.6px;top:212.4px">Normal</div>
<svg style="left:1000.8px;top:214.4px" width="11.6" height="10.6"><use href="#c-cal"/></svg>
<svg style="left:1085.8px;top:214.4px" width="11.6" height="10.6"><use href="#c-cal"/></svg>
<div class="rowline" style="top:260.4px"></div>
<svg style="left:372.5px;top:241.0px" width="12" height="12"><use href="#s-open"/></svg>
<div class="t tn" id="n2" style="left:394.4px;top:239.8px">Product listing page</div>
<svg style="left:635.5px;top:242.2px" width="9.6" height="9.6"><use href="#c-hour"/></svg>
<svg style="left:728px;top:240.7px" width="12.6" height="12.6"><use href="#c-play"/></svg>
<div class="t at" style="left:744.3px;top:239.8px">Add time</div>
<svg style="left:834.8px;top:241.6px" width="11" height="11"><use href="#c-asg"/></svg>
<svg style="left:912.3px;top:241.6px" width="9.6" height="10.6"><use href="#c-flag"/></svg>
<div class="t nm" style="left:929.6px;top:239.8px">Normal</div>
<svg style="left:1000.8px;top:241.8px" width="11.6" height="10.6"><use href="#c-cal"/></svg>
<svg style="left:1085.8px;top:241.8px" width="11.6" height="10.6"><use href="#c-cal"/></svg>
<div class="rowline" style="top:287.9px"></div>
<svg style="left:372.5px;top:268.5px" width="12" height="12"><use href="#s-open"/></svg>
<div class="t tn" id="n3" style="left:394.4px;top:267.3px">Product detail page</div>
<svg style="left:635.5px;top:269.7px" width="9.6" height="9.6"><use href="#c-hour"/></svg>
<svg style="left:728px;top:268.2px" width="12.6" height="12.6"><use href="#c-play"/></svg>
<div class="t at" style="left:744.3px;top:267.3px">Add time</div>
<svg style="left:834.8px;top:269.1px" width="11" height="11"><use href="#c-asg"/></svg>
<svg style="left:912.3px;top:269.1px" width="9.6" height="10.6"><use href="#c-flag"/></svg>
<div class="t nm" style="left:929.6px;top:267.3px">Normal</div>
<svg style="left:1000.8px;top:269.3px" width="11.6" height="10.6"><use href="#c-cal"/></svg>
<svg style="left:1085.8px;top:269.3px" width="11.6" height="10.6"><use href="#c-cal"/></svg>
<div class="rowline" style="top:315.3px"></div>
<svg style="left:372.5px;top:295.9px" width="12" height="12"><use href="#s-open"/></svg>
<div class="t tn" id="n4" style="left:394.4px;top:294.7px">Digital product page</div>
<svg style="left:635.5px;top:297.1px" width="9.6" height="9.6"><use href="#c-hour"/></svg>
<svg style="left:728px;top:295.6px" width="12.6" height="12.6"><use href="#c-play"/></svg>
<div class="t at" style="left:744.3px;top:294.7px">Add time</div>
<svg style="left:834.8px;top:296.5px" width="11" height="11"><use href="#c-asg"/></svg>
<svg style="left:912.3px;top:296.5px" width="9.6" height="10.6"><use href="#c-flag"/></svg>
<div class="t nm" style="left:929.6px;top:294.7px">Normal</div>
<svg style="left:1000.8px;top:296.7px" width="11.6" height="10.6"><use href="#c-cal"/></svg>
<svg style="left:1085.8px;top:296.7px" width="11.6" height="10.6"><use href="#c-cal"/></svg>
<div class="rowline" style="top:342.7px"></div>
<svg style="left:372.5px;top:323.3px" width="12" height="12"><use href="#s-open"/></svg>
<div class="t tn" id="n5" style="left:394.4px;top:322.1px">Cart page</div>
<svg style="left:635.5px;top:324.5px" width="9.6" height="9.6"><use href="#c-hour"/></svg>
<svg style="left:728px;top:323.0px" width="12.6" height="12.6"><use href="#c-play"/></svg>
<div class="t at" style="left:744.3px;top:322.1px">Add time</div>
<svg style="left:834.8px;top:323.9px" width="11" height="11"><use href="#c-asg"/></svg>
<svg style="left:912.3px;top:323.9px" width="9.6" height="10.6"><use href="#c-flag"/></svg>
<div class="t nm" style="left:929.6px;top:322.1px">Normal</div>
<svg style="left:1000.8px;top:324.1px" width="11.6" height="10.6"><use href="#c-cal"/></svg>
<svg style="left:1085.8px;top:324.1px" width="11.6" height="10.6"><use href="#c-cal"/></svg>
<div class="rowline" style="top:370.1px"></div>
<svg style="left:372.5px;top:350.7px" width="12" height="12"><use href="#s-open"/></svg>
<div class="t tn" id="n6" style="left:394.4px;top:349.5px">Checkout Process Page</div>
<svg style="left:635.5px;top:351.9px" width="9.6" height="9.6"><use href="#c-hour"/></svg>
<svg style="left:728px;top:350.4px" width="12.6" height="12.6"><use href="#c-play"/></svg>
<div class="t at" style="left:744.3px;top:349.5px">Add time</div>
<svg style="left:834.8px;top:351.3px" width="11" height="11"><use href="#c-asg"/></svg>
<svg style="left:912.3px;top:351.3px" width="9.6" height="10.6"><use href="#c-flag"/></svg>
<div class="t nm" style="left:929.6px;top:349.5px">Normal</div>
<svg style="left:1000.8px;top:351.5px" width="11.6" height="10.6"><use href="#c-cal"/></svg>
<svg style="left:1085.8px;top:351.5px" width="11.6" height="10.6"><use href="#c-cal"/></svg>
<div class="rowline" style="top:397.5px"></div>
<svg style="left:372.5px;top:378.1px" width="12" height="12"><use href="#s-open"/></svg>
<div class="t tn" id="n7" style="left:394.4px;top:376.9px">Order History &amp; Tracking Page</div>
<svg style="left:635.5px;top:379.3px" width="9.6" height="9.6"><use href="#c-hour"/></svg>
<svg style="left:728px;top:377.8px" width="12.6" height="12.6"><use href="#c-play"/></svg>
<div class="t at" style="left:744.3px;top:376.9px">Add time</div>
<svg style="left:834.8px;top:378.7px" width="11" height="11"><use href="#c-asg"/></svg>
<svg style="left:912.3px;top:378.7px" width="9.6" height="10.6"><use href="#c-flag"/></svg>
<div class="t nm" style="left:929.6px;top:376.9px">Normal</div>
<svg style="left:1000.8px;top:378.9px" width="11.6" height="10.6"><use href="#c-cal"/></svg>
<svg style="left:1085.8px;top:378.9px" width="11.6" height="10.6"><use href="#c-cal"/></svg>
<div class="rowline" style="top:425.0px"></div>
<svg style="left:372.5px;top:405.6px" width="12" height="12"><use href="#s-open"/></svg>
<div class="t tn" id="n8" style="left:394.4px;top:404.4px">Wishlist Page</div>
<svg style="left:635.5px;top:406.8px" width="9.6" height="9.6"><use href="#c-hour"/></svg>
<svg style="left:728px;top:405.3px" width="12.6" height="12.6"><use href="#c-play"/></svg>
<div class="t at" style="left:744.3px;top:404.4px">Add time</div>
<svg style="left:834.8px;top:406.2px" width="11" height="11"><use href="#c-asg"/></svg>
<svg style="left:912.3px;top:406.2px" width="9.6" height="10.6"><use href="#c-flag"/></svg>
<div class="t nm" style="left:929.6px;top:404.4px">Normal</div>
<svg style="left:1000.8px;top:406.4px" width="11.6" height="10.6"><use href="#c-cal"/></svg>
<svg style="left:1085.8px;top:406.4px" width="11.6" height="10.6"><use href="#c-cal"/></svg>
<div class="rowline" style="top:452.4px"></div>
<svg style="left:372.5px;top:433.0px" width="12" height="12"><use href="#s-open"/></svg>
<div class="t tn" id="n9" style="left:394.4px;top:431.8px">Blog landing page</div>
<svg style="left:635.5px;top:434.2px" width="9.6" height="9.6"><use href="#c-hour"/></svg>
<svg style="left:728px;top:432.7px" width="12.6" height="12.6"><use href="#c-play"/></svg>
<div class="t at" style="left:744.3px;top:431.8px">Add time</div>
<svg style="left:834.8px;top:433.6px" width="11" height="11"><use href="#c-asg"/></svg>
<svg style="left:912.3px;top:433.6px" width="9.6" height="10.6"><use href="#c-flag"/></svg>
<div class="t nm" style="left:929.6px;top:431.8px">Normal</div>
<svg style="left:1000.8px;top:433.8px" width="11.6" height="10.6"><use href="#c-cal"/></svg>
<svg style="left:1085.8px;top:433.8px" width="11.6" height="10.6"><use href="#c-cal"/></svg>
<div class="rowline" style="top:479.8px"></div>
<svg style="left:372.5px;top:460.4px" width="12" height="12"><use href="#s-open"/></svg>
<div class="t tn" id="n10" style="left:394.4px;top:459.2px">Article page</div>
<svg style="left:635.5px;top:461.6px" width="9.6" height="9.6"><use href="#c-hour"/></svg>
<svg style="left:728px;top:460.1px" width="12.6" height="12.6"><use href="#c-play"/></svg>
<div class="t at" style="left:744.3px;top:459.2px">Add time</div>
<svg style="left:834.8px;top:461.0px" width="11" height="11"><use href="#c-asg"/></svg>
<svg style="left:912.3px;top:461.0px" width="9.6" height="10.6"><use href="#c-flag"/></svg>
<div class="t nm" style="left:929.6px;top:459.2px">Normal</div>
<svg style="left:1000.8px;top:461.2px" width="11.6" height="10.6"><use href="#c-cal"/></svg>
<svg style="left:1085.8px;top:461.2px" width="11.6" height="10.6"><use href="#c-cal"/></svg>
<div class="rowline" style="top:507.2px"></div>
<svg style="left:372.5px;top:487.8px" width="12" height="12"><use href="#s-open"/></svg>
<div class="t tn" id="n11" style="left:394.4px;top:486.6px">Contact page</div>
<svg style="left:635.5px;top:489.0px" width="9.6" height="9.6"><use href="#c-hour"/></svg>
<svg style="left:728px;top:487.5px" width="12.6" height="12.6"><use href="#c-play"/></svg>
<div class="t at" style="left:744.3px;top:486.6px">Add time</div>
<svg style="left:834.8px;top:488.4px" width="11" height="11"><use href="#c-asg"/></svg>
<svg style="left:912.3px;top:488.4px" width="9.6" height="10.6"><use href="#c-flag"/></svg>
<div class="t nm" style="left:929.6px;top:486.6px">Normal</div>
<svg style="left:1000.8px;top:488.6px" width="11.6" height="10.6"><use href="#c-cal"/></svg>
<svg style="left:1085.8px;top:488.6px" width="11.6" height="10.6"><use href="#c-cal"/></svg>
<div class="rowline" style="top:534.6px"></div>
<svg style="left:372.5px;top:515.2px" width="12" height="12"><use href="#s-open"/></svg>
<div class="t tn" id="n12" style="left:394.4px;top:514.0px">Search results page</div>
<svg style="left:635.5px;top:516.4px" width="9.6" height="9.6"><use href="#c-hour"/></svg>
<svg style="left:728px;top:514.9px" width="12.6" height="12.6"><use href="#c-play"/></svg>
<div class="t at" style="left:744.3px;top:514.0px">Add time</div>
<svg style="left:834.8px;top:515.8px" width="11" height="11"><use href="#c-asg"/></svg>
<svg style="left:912.3px;top:515.8px" width="9.6" height="10.6"><use href="#c-flag"/></svg>
<div class="t nm" style="left:929.6px;top:514.0px">Normal</div>
<svg style="left:1000.8px;top:516.0px" width="11.6" height="10.6"><use href="#c-cal"/></svg>
<svg style="left:1085.8px;top:516.0px" width="11.6" height="10.6"><use href="#c-cal"/></svg>
<div class="rowline" style="top:562.1px"></div>
<svg style="left:372.5px;top:542.7px" width="12" height="12"><use href="#s-open"/></svg>
<div class="t tn" id="n13" style="left:394.4px;top:541.5px">404 page</div>
<svg style="left:635.5px;top:543.9px" width="9.6" height="9.6"><use href="#c-hour"/></svg>
<svg style="left:728px;top:542.4px" width="12.6" height="12.6"><use href="#c-play"/></svg>
<div class="t at" style="left:744.3px;top:541.5px">Add time</div>
<svg style="left:834.8px;top:543.3px" width="11" height="11"><use href="#c-asg"/></svg>
<svg style="left:912.3px;top:543.3px" width="9.6" height="10.6"><use href="#c-flag"/></svg>
<div class="t nm" style="left:929.6px;top:541.5px">Normal</div>
<svg style="left:1000.8px;top:543.5px" width="11.6" height="10.6"><use href="#c-cal"/></svg>
<svg style="left:1085.8px;top:543.5px" width="11.6" height="10.6"><use href="#c-cal"/></svg>
<div class="rowline" style="top:589.5px"></div>
<svg style="left:372.5px;top:570.1px" width="12" height="12"><use href="#s-open"/></svg>
<div class="t tn" id="n14" style="left:394.4px;top:568.9px">Account pages</div>
<svg style="left:635.5px;top:571.3px" width="9.6" height="9.6"><use href="#c-hour"/></svg>
<svg style="left:728px;top:569.8px" width="12.6" height="12.6"><use href="#c-play"/></svg>
<div class="t at" style="left:744.3px;top:568.9px">Add time</div>
<svg style="left:834.8px;top:570.7px" width="11" height="11"><use href="#c-asg"/></svg>
<svg style="left:912.3px;top:570.7px" width="9.6" height="10.6"><use href="#c-flag"/></svg>
<div class="t nm" style="left:929.6px;top:568.9px">Normal</div>
<svg style="left:1000.8px;top:570.9px" width="11.6" height="10.6"><use href="#c-cal"/></svg>
<svg style="left:1085.8px;top:570.9px" width="11.6" height="10.6"><use href="#c-cal"/></svg>
<div class="rowline" style="top:616.9px"></div>
<svg style="left:372.5px;top:597.5px" width="12" height="12"><use href="#s-open"/></svg>
<div class="t tn" id="n15" style="left:394.4px;top:596.3px">Login/Registration page</div>
<svg style="left:635.5px;top:598.7px" width="9.6" height="9.6"><use href="#c-hour"/></svg>
<svg style="left:728px;top:597.2px" width="12.6" height="12.6"><use href="#c-play"/></svg>
<div class="t at" style="left:744.3px;top:596.3px">Add time</div>
<svg style="left:834.8px;top:598.1px" width="11" height="11"><use href="#c-asg"/></svg>
<svg style="left:912.3px;top:598.1px" width="9.6" height="10.6"><use href="#c-flag"/></svg>
<div class="t nm" style="left:929.6px;top:596.3px">Normal</div>
<svg style="left:1000.8px;top:598.3px" width="11.6" height="10.6"><use href="#c-cal"/></svg>
<svg style="left:1085.8px;top:598.3px" width="11.6" height="10.6"><use href="#c-cal"/></svg>
<div class="rowline" style="top:644.3px"></div>
<svg style="left:372.5px;top:624.9px" width="12" height="12"><use href="#s-open"/></svg>
<div class="t tn" id="n16" style="left:394.4px;top:623.7px">Reset Password page</div>
<svg style="left:635.5px;top:626.1px" width="9.6" height="9.6"><use href="#c-hour"/></svg>
<svg style="left:728px;top:624.6px" width="12.6" height="12.6"><use href="#c-play"/></svg>
<div class="t at" style="left:744.3px;top:623.7px">Add time</div>
<svg style="left:834.8px;top:625.5px" width="11" height="11"><use href="#c-asg"/></svg>
<svg style="left:912.3px;top:625.5px" width="9.6" height="10.6"><use href="#c-flag"/></svg>
<div class="t nm" style="left:929.6px;top:623.7px">Normal</div>
<svg style="left:1000.8px;top:625.7px" width="11.6" height="10.6"><use href="#c-cal"/></svg>
<svg style="left:1085.8px;top:625.7px" width="11.6" height="10.6"><use href="#c-cal"/></svg>
<div class="rowline" style="top:671.7px"></div>
<svg style="left:372.5px;top:652.3px" width="12" height="12"><use href="#s-open"/></svg>
<div class="t tn" id="n17" style="left:394.4px;top:651.1px">Activate account page</div>
<svg style="left:635.5px;top:653.5px" width="9.6" height="9.6"><use href="#c-hour"/></svg>
<svg style="left:728px;top:652.0px" width="12.6" height="12.6"><use href="#c-play"/></svg>
<div class="t at" style="left:744.3px;top:651.1px">Add time</div>
<svg style="left:834.8px;top:652.9px" width="11" height="11"><use href="#c-asg"/></svg>
<svg style="left:912.3px;top:652.9px" width="9.6" height="10.6"><use href="#c-flag"/></svg>
<div class="t nm" style="left:929.6px;top:651.1px">Normal</div>
<svg style="left:1000.8px;top:653.1px" width="11.6" height="10.6"><use href="#c-cal"/></svg>
<svg style="left:1085.8px;top:653.1px" width="11.6" height="10.6"><use href="#c-cal"/></svg>
<div class="rowline" style="top:699.2px"></div>
<svg style="left:372.5px;top:679.8px" width="12" height="12"><use href="#s-open"/></svg>
<div class="t tn" id="n18" style="left:394.4px;top:678.6px">FAQs page</div>
<svg style="left:635.5px;top:681.0px" width="9.6" height="9.6"><use href="#c-hour"/></svg>
<svg style="left:728px;top:679.5px" width="12.6" height="12.6"><use href="#c-play"/></svg>
<div class="t at" style="left:744.3px;top:678.6px">Add time</div>
<svg style="left:834.8px;top:680.4px" width="11" height="11"><use href="#c-asg"/></svg>
<svg style="left:912.3px;top:680.4px" width="9.6" height="10.6"><use href="#c-flag"/></svg>
<div class="t nm" style="left:929.6px;top:678.6px">Normal</div>
<svg style="left:1000.8px;top:680.6px" width="11.6" height="10.6"><use href="#c-cal"/></svg>
<svg style="left:1085.8px;top:680.6px" width="11.6" height="10.6"><use href="#c-cal"/></svg>
<svg style="left:523.4px;top:352.1px" width="8.2" height="9.2"><use href="#c-sub"/></svg>
<div class="t sub" style="left:535px;top:350.1px">3</div>
<svg style="left:357px;top:353.3px" width="5" height="7" viewBox="0 0 5 7"><path d="M.4 .4 L4.6 3.5 L.4 6.6Z" fill="#52565d"/></svg>
<svg style="left:504.0px;top:243.5px" width="9" height="7.2"><use href="#c-chk"/></svg>
<div class="t sub" style="left:516.0px;top:240.4px">0/6</div>
<svg style="left:500.8px;top:271.0px" width="9" height="7.2"><use href="#c-chk"/></svg>
<div class="t sub" style="left:512.6px;top:267.9px">0/16</div>
<svg style="left:450.6px;top:325.8px" width="9" height="7.2"><use href="#c-chk"/></svg>
<div class="t sub" style="left:462.6px;top:322.7px">0/11</div>
<svg style="left:502.5px;top:517.7px" width="9" height="7.2"><use href="#c-chk"/></svg>
<div class="t sub" style="left:514.6px;top:514.6px">0/2</div>
<svg style="left:477.8px;top:572.6px" width="9" height="7.2"><use href="#c-chk"/></svg>
<div class="t sub" style="left:489.2px;top:569.5px">0/1</div>
<!--ROWS-->
<svg style="left:320px;top:681.8px" width="5" height="8" viewBox="0 0 5 8" fill="#b5b7bc"><circle cx="1" cy="1" r=".8"/><circle cx="4" cy="1" r=".8"/><circle cx="1" cy="4" r=".8"/><circle cx="4" cy="4" r=".8"/><circle cx="1" cy="7" r=".8"/><circle cx="4" cy="7" r=".8"/></svg>
<div class="a" style="left:332px;top:679.8px;width:12px;height:12px;border:1.1px solid #a7aab0;border-radius:3.5px"></div>
<svg style="left:357px;top:682.4px" width="5" height="7" viewBox="0 0 5 7"><path d="M.4 .4 L4.6 3.5 L.4 6.6Z" fill="#c2c4c9"/></svg>
<div class="a" style="left:625px;top:672.5px;width:100px;height:26px;border:1px solid #d9dade;border-radius:3px"></div>
<svg style="left:699px;top:673.5px" width="12" height="14" viewBox="0 0 12 14"><path d="M3.6 7.4 V1.8 A1 1 0 0 1 5.6 1.8 V5.4 L6 4.6 A.9.9 0 0 1 7.7 5 L8 5 A.9.9 0 0 1 9.6 5.6 L9.9 5.8 A.9.9 0 0 1 11.2 6.6 V9.6 Q11.2 11.6 10.2 13.4 H5 Q3.6 11.6 1 9.2 A1 1 0 0 1 2.4 7.8Z" fill="#fff" stroke="#2a2e34" stroke-width="1.2" stroke-linejoin="round"/><path d="M6 8.4 V11 M7.8 8.4 V11 M9.5 8.4 V11" stroke="#2a2e34" stroke-width=".6"/></svg>
<div class="a" style="left:46px;top:685.5px;width:1106px;height:30px;background:#f4f4f5;border-top:1px solid #ebebed"></div>
<div class="a" style="left:46px;top:715.5px;width:1106px;height:5px;background:#f9f9f9"></div>
<div class="a" style="left:56px;top:688.5px;width:74px;height:23px;background:#f9f9fa;border-radius:5px"></div>
<div class="a" style="left:130.5px;top:695px;width:1px;height:11px;background:#e4e4e7"></div>
<svg style="left:61px;top:695.5px" width="9" height="10" viewBox="0 0 9 10"><path d="M.8 .6 V9.6 M.8 1 H7.8 L6.4 3.4 L7.8 5.8 H.8" fill="none" stroke="#6a6e75" stroke-width="1" stroke-linecap="round" stroke-linejoin="round"/></svg>
<div class="t" style="left:73.6px;top:693.4px;font-size:9.6px;font-weight:700;color:#2a2e34">4 Priorities</div>
<!--BOTTOM-->
</body>
</html>
